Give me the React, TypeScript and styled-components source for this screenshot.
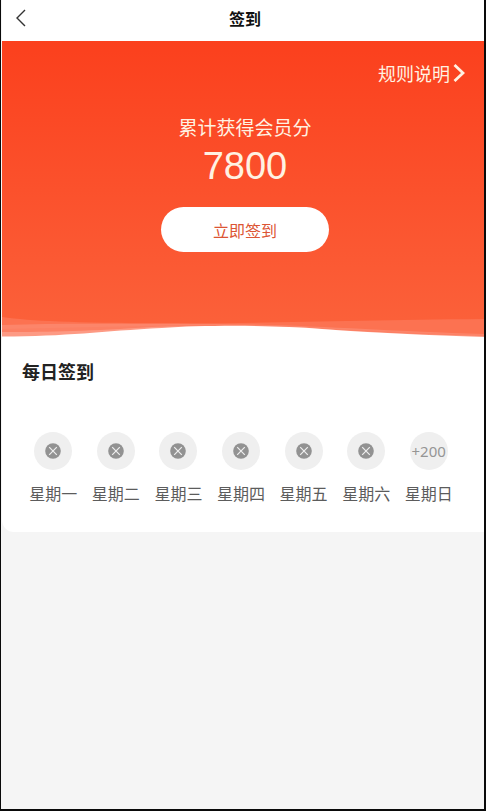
import React from "react";
import styled, { createGlobalStyle } from "styled-components";

const GlobalStyle = createGlobalStyle`
  *, *::before, *::after { box-sizing: border-box; }
  body {
    margin: 0;
    background: #f5f5f5;
    font-family: "Noto Sans CJK SC", sans-serif;
    color: #222;
  }
  button { font-family: inherit; cursor: pointer; }
`;

const Screen = styled.div`
  min-height: 100vh;
  background: #f5f5f5;
  border: solid #0a0a0a;
  border-width: 0 2px 2px 1px;
  padding-left: 1px;
`;

const Header = styled.header`
  display: grid;
  grid-template-columns: 40px 1fr 36px;
  align-items: center;
  height: 41px;
  padding-bottom: 6px;
  background: #fff;
`;

const BackButton = styled.button`
  display: flex;
  align-items: center;
  justify-content: center;
  height: 34px;
  padding: 0 2px 0 0;
  border: 0;
  background: none;
`;

const PageTitle = styled.h1`
  margin: 0;
  font-size: 16px;
  line-height: 24px;
  font-weight: 700;
  text-align: center;
  color: #111;
`;

const Hero = styled.section`
  color: #fff2e2;
  background: linear-gradient(#fb401d, #fb623b);
`;

const HeroContent = styled.div`
  display: flex;
  flex-direction: column;
  align-items: center;
  padding: 20px 16px 62px 20px;
`;

const RulesLink = styled.a`
  display: flex;
  align-items: center;
  align-self: flex-end;
  gap: 3px;
  margin-right: 3px;
  font-size: 18px;
  line-height: 24px;
  color: inherit;
  text-decoration: none;
`;

const PointsLabel = styled.p`
  margin: 28px 0 0;
  font-size: 19px;
  line-height: 28px;
`;

const Points = styled.strong`
  font-family: "Liberation Sans", Arial, sans-serif;
  font-size: 38px;
  line-height: 50px;
  font-weight: 400;
`;

const CheckInButton = styled.button`
  width: 168px;
  height: 45px;
  margin-top: 16px;
  padding: 0;
  border: 0;
  border-radius: 24px;
  background: #fff;
  color: #dc5534;
  font-size: 16px;
`;

const Wave = styled.svg`
  display: block;
  width: 100%;
  height: 24px;
`;

const Daily = styled.section`
  padding: 19px 24px 27px 20px;
  border-radius: 0 0 0 12px;
  background: #fff;
`;

const SectionTitle = styled.h2`
  margin: 0;
  font-size: 18px;
  line-height: 28px;
  font-weight: 700;
`;

const Week = styled.ul`
  display: grid;
  grid-template-columns: repeat(7, 1fr);
  margin: 47px 0 0;
  padding: 0;
  list-style: none;
`;

const Day = styled.li`
  display: flex;
  flex-direction: column;
  align-items: center;
  gap: 11px;
  font-size: 16px;
  line-height: 24px;
  color: #5c5c5c;
`;

const DayMark = styled.span`
  display: flex;
  align-items: center;
  justify-content: center;
  width: 38px;
  height: 38px;
  border-radius: 50%;
  background: #efefef;
  color: #959595;
  font-family: "Noto Sans", sans-serif;
  font-size: 15px;
  white-space: nowrap;
`;

const days: { name: string; reward?: string }[] = [
  { name: "星期一" },
  { name: "星期二" },
  { name: "星期三" },
  { name: "星期四" },
  { name: "星期五" },
  { name: "星期六" },
  { name: "星期日", reward: "+200" },
];

const MissedIcon = () => (
  <svg width="16" height="16" viewBox="0 0 16 16" role="img" aria-label="未签到">
    <circle cx="8" cy="8" r="7.8" fill="#929292" />
    <path d="M4.2 4.2l7.6 7.6M11.8 4.2l-7.6 7.6" stroke="#efefef" strokeWidth="1.2" />
  </svg>
);

export default function App() {
  return (
    <>
      <GlobalStyle />
      <Screen>
        <Header>
          <BackButton type="button" aria-label="返回">
            <svg width="12" height="18" viewBox="0 0 12 18" fill="none" stroke="#333" strokeWidth="1.4">
              <path d="M10 1L2 9l8 8" />
            </svg>
          </BackButton>
          <PageTitle>签到</PageTitle>
        </Header>
        <main>
          <Hero>
            <HeroContent>
              <RulesLink href="#rules">
                规则说明
                <svg width="12" height="18" viewBox="0 0 12 18" fill="none" stroke="currentColor" strokeWidth="2.8">
                  <path d="M1.5 1l8.5 8-8.5 8" />
                </svg>
              </RulesLink>
              <PointsLabel>累计获得会员分</PointsLabel>
              <Points>7800</Points>
              <CheckInButton type="button">立即签到</CheckInButton>
            </HeroContent>
            <Wave viewBox="0 0 482 24" preserveAspectRatio="none" aria-hidden="true">
              <path d="M0 3C30 7 70 9 160 9C250 10 350 6 482 5V24H0Z" fill="#fc7251" />
              <path d="M0 11C60 9 110 10 180 10C290 9 370 17 482 20V24H0Z" fill="#fc856a" />
              <path d="M0 15C65 14 125 12 190 11C285 10 370 19 482 21V24H0Z" fill="#fc8064" />
              <path d="M0 18C50 18 90 17 150 13C210 11 290 12 335 16C385 19 430 21 482 22V24H0Z" fill="#fd9a84" />
              <path d="M0 22.5C65 22.5 100 17 160 14C205 11 270 11 320 15C375 19 425 21 482 23V24H0Z" fill="#fff" />
            </Wave>
          </Hero>
          <Daily>
            <SectionTitle>每日签到</SectionTitle>
            <Week>
              {days.map(({ name, reward }) => (
                <Day key={name}>
                  <DayMark>{reward ?? <MissedIcon />}</DayMark>
                  {name}
                </Day>
              ))}
            </Week>
          </Daily>
        </main>
      </Screen>
    </>
  );
}
